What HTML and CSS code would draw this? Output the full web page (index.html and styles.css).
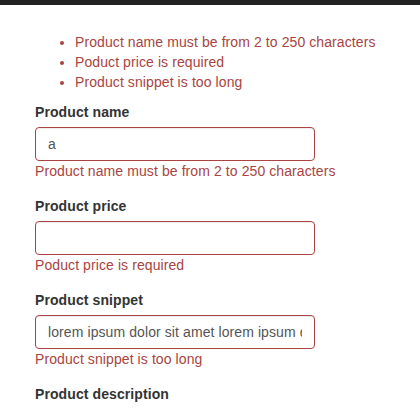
FILE: index.html
```
<!DOCTYPE html>
<html>
<head>
<meta charset="utf-8">
<link rel="stylesheet" href="styles.css">
</head>
<body>
<div class="topbar"></div>
<div class="container">
  <ul class="errors">
    <li>Product name must be from 2 to 250 characters</li>
    <li>Poduct price is required</li>
    <li>Product snippet is too long</li>
  </ul>
  <div class="form-group">
    <label class="label">Product name</label>
    <input class="input" type="text" value="a">
    <div class="help">Product name must be from 2 to 250 characters</div>
  </div>
  <div class="form-group">
    <label class="label">Product price</label>
    <input class="input" type="text" value="">
    <div class="help">Poduct price is required</div>
  </div>
  <div class="form-group">
    <label class="label">Product snippet</label>
    <input class="input" type="text" value="lorem ipsum dolor sit amet lorem ipsum dolor sit amet">
    <div class="help">Product snippet is too long</div>
  </div>
  <div class="form-group">
    <label class="label">Product description</label>
  </div>
</div>
</body>
</html>
```
FILE: styles.css
```
html, body {
  margin: 0;
  padding: 0;
  background: #fff;
}
body {
  font-family: "Liberation Sans", Arial, sans-serif;
  font-size: 14px;
  line-height: 20px;
  color: #333;
  letter-spacing: 0.09px;
}
.topbar {
  height: 5px;
  background: #222;
}
.container {
  padding: 27px 35px 0 35px;
}
.errors {
  margin: 0 0 10px 0;
  padding-left: 40px;
  color: #a94442;
}
.form-group {
  margin-bottom: 15px;
}
.label {
  display: block;
  font-weight: bold;
  margin-bottom: 5px;
  color: #333;
}
.input {
  display: block;
  box-sizing: border-box;
  width: 280px;
  height: 34px;
  margin: 0;
  padding: 6px 12px;
  font-family: "Liberation Sans", Arial, sans-serif;
  font-size: 14px;
  line-height: 20px;
  letter-spacing: 0.09px;
  color: #555;
  background: #fff;
  border: 1px solid #a94442;
  border-radius: 4px;
  box-shadow: inset 0 1px 1px rgba(0,0,0,.075);
  outline: none;
}
.help {
  color: #a94442;
}
```
